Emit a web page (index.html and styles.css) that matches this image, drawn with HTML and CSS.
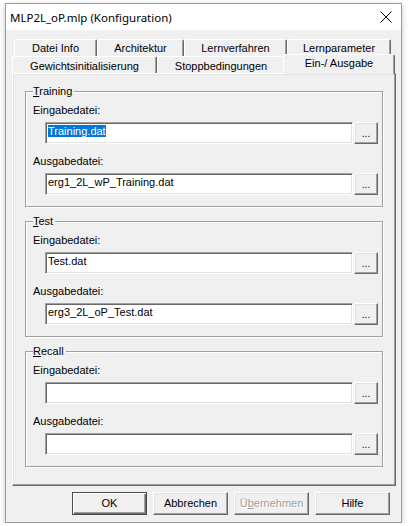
FILE: index.html
```html
<!DOCTYPE html>
<html lang="de">
<head>
<meta charset="utf-8">
<title>MLP2L_oP.mlp (Konfiguration)</title>
<link rel="stylesheet" href="styles.css">
</head>
<body>
<div class="window">
  <div class="titlebar">
    <span class="title">MLP2L_oP.mlp (Konfiguration)</span>
    <svg class="close" width="12" height="12" viewBox="0 0 12 12"><path d="M0.5 0.5 L11.5 11.5 M11.5 0.5 L0.5 11.5" stroke="#000" stroke-width="1" fill="none"/></svg>
  </div>
  <div class="client">
    <div class="tabs">
      <div class="tabrow back">
        <div class="tab t-datei">Datei Info</div>
        <div class="tab t-arch">Architektur</div>
        <div class="tab t-lernv">Lernverfahren</div>
        <div class="tab t-lernp">Lernparameter</div>
      </div>
      <div class="tabrow front">
        <div class="tab t-gew">Gewichtsinitialisierung</div>
        <div class="tab t-stopp">Stoppbedingungen</div>
        <div class="tab sel">Ein-/ Ausgabe</div>
      </div>
    </div>
    <div class="panel">
      <div class="group">
        <div class="group-title"><u>T</u>raining</div>
        <div class="label">Eingabedatei:</div>
        <div class="field-row"><div class="input"><span class="selected">Training.dat</span></div><div class="browse">...</div></div>
        <div class="label second">Ausgabedatei:</div>
        <div class="field-row"><div class="input">erg1_2L_wP_Training.dat</div><div class="browse">...</div></div>
      </div>
      <div class="group">
        <div class="group-title"><u>T</u>est</div>
        <div class="label">Eingabedatei:</div>
        <div class="field-row"><div class="input">Test.dat</div><div class="browse">...</div></div>
        <div class="label second">Ausgabedatei:</div>
        <div class="field-row"><div class="input">erg3_2L_oP_Test.dat</div><div class="browse">...</div></div>
      </div>
      <div class="group">
        <div class="group-title"><u>R</u>ecall</div>
        <div class="label">Eingabedatei:</div>
        <div class="field-row"><div class="input"></div><div class="browse">...</div></div>
        <div class="label second">Ausgabedatei:</div>
        <div class="field-row"><div class="input"></div><div class="browse">...</div></div>
      </div>
    </div>
    <div class="buttons">
      <div class="btn default">OK</div>
      <div class="btn">Abbrechen</div>
      <div class="btn disabled">Ü<u>b</u>ernehmen</div>
      <div class="btn">Hilfe</div>
    </div>
  </div>
</div>
</body>
</html>
```
FILE: styles.css
```css
* { box-sizing: border-box; }
html, body { margin: 0; padding: 0; background: #fff; }
body {
  font-family: "Liberation Sans", Arial, sans-serif;
  font-size: 11px;
  color: #000;
}
.window {
  margin: 3px 0 0 5px;
  width: 397px;
  height: 520px;
  border: 1px solid #9a9a9a;
  background: #f0f0f0;
  box-shadow: 0 2px 6px rgba(0,0,0,0.22);
  display: flex;
  flex-direction: column;
}
.titlebar {
  height: 26px;
  background: #fff;
  display: flex;
  align-items: center;
  justify-content: space-between;
  padding: 0 9px 0 4px;
}
.title {
  font-family: "Noto Sans", sans-serif;
  font-size: 11.5px;
  color: #000;
}
.close { display: block; }
.client {
  flex: 1;
  padding: 9px 5px 0 6px;
  display: flex;
  flex-direction: column;
}
.tabrow {
  display: flex;
  height: 17px;
}
.tabrow.back { padding-left: 2px; }
.tab {
  height: 17px;
  text-align: center;
  line-height: 13px;
  padding-top: 2px;
  border-top: 1px solid #fff;
  border-left: 1px solid #fff;
  border-right: 1px solid #696969;
  box-shadow: inset -1px 0 #a0a0a0;
  border-radius: 2px 2px 0 0;
  background: #f0f0f0;
  white-space: nowrap;
}
.tabrow.front .tab { padding-top: 3px; }
.t-datei { width: 83px; }
.t-arch { width: 87px; }
.t-lernv { width: 103px; }
.t-lernp { width: 104px; }
.t-gew { width: 145px; }
.t-stopp { width: 128px; }
.tabrow.front .tab.sel {
  position: relative;
  z-index: 1;
  width: 112px;
  height: 20px;
  margin: -2px 0 0 -2px;
  padding-top: 2px;
}
.panel {
  width: 384px;
  height: 413px;
  border-top: 1px solid #fff;
  border-left: 1px solid #fff;
  border-right: 1px solid #696969;
  border-bottom: 1px solid #696969;
  box-shadow: inset -1px -1px #a0a0a0, inset 1px 1px #e3e3e3;
  padding: 17px 0 0 12px;
  display: flex;
  flex-direction: column;
  gap: 14px;
}
.group {
  width: 358px;
  height: 116px;
  border: 1px solid #a0a0a0;
  box-shadow: inset 1px 1px #fff, 1px 1px #fff;
  padding: 0 0 0 7px;
}
.group-title {
  display: block;
  width: max-content;
  margin-top: -7px;
  line-height: 13px;
  background: #f0f0f0;
  padding: 0 2px 0 0;
}
.label {
  line-height: 13px;
  margin-top: 6px;
}
.label.second { margin-top: 11px; }
.field-row {
  display: flex;
  gap: 1px;
  margin: 5px 0 0 12px;
  height: 22px;
}
.input {
  width: 308px;
  height: 22px;
  background: #fff;
  border-top: 1px solid #a0a0a0;
  border-left: 1px solid #a0a0a0;
  border-right: 1px solid #fff;
  border-bottom: 1px solid #fff;
  box-shadow: inset 1px 1px #696969, inset -1px -1px #e3e3e3;
  padding: 2px 0 0 2px;
  line-height: 13px;
  white-space: nowrap;
}
.selected {
  background: #0078d7;
  color: #fff;
}
.browse {
  width: 24px;
  height: 22px;
  background: #f0f0f0;
  border-top: 1px solid #fff;
  border-left: 1px solid #fff;
  border-right: 1px solid #696969;
  border-bottom: 1px solid #696969;
  box-shadow: inset -1px -1px #a0a0a0, inset 1px 1px #e3e3e3;
  text-align: center;
  line-height: 13px;
  padding-top: 4px;
  font-size: 10px;
}
.buttons {
  display: flex;
  justify-content: flex-end;
  gap: 6px;
  margin-top: 6px;
  padding-right: 6px;
}
.btn {
  width: 75px;
  height: 23px;
  background: #f0f0f0;
  border-top: 1px solid #fff;
  border-left: 1px solid #fff;
  border-right: 1px solid #696969;
  border-bottom: 1px solid #696969;
  box-shadow: inset -1px -1px #a0a0a0, inset 1px 1px #e3e3e3;
  text-align: center;
  line-height: 13px;
  padding-top: 4px;
  font-size: 11px;
}
.btn.default {
  border: 1px solid #4a4a4a;
  box-shadow: inset 1px 1px #fff, inset -1px -1px #696969, inset -2px -2px #a0a0a0;
}
.btn.disabled {
  color: #a0a0a0;
  text-shadow: 1px 1px #fff;
}
```
